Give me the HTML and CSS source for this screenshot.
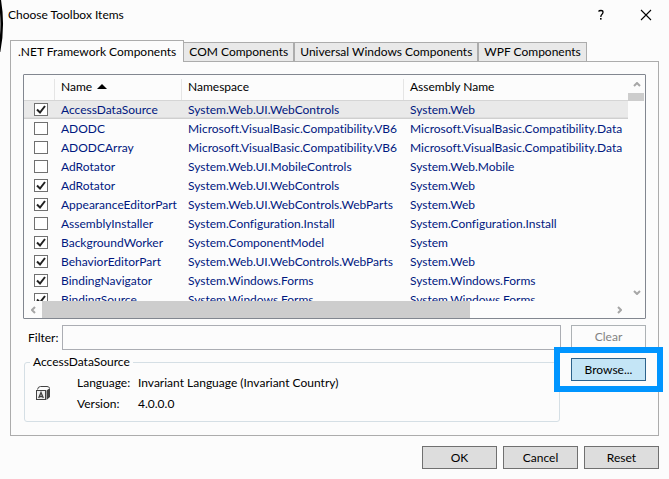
FILE: index.html
```html
<!DOCTYPE html>
<html lang="en">
<head>
    <meta charset="UTF-8">
    <meta name="viewport" content="width=device-width, initial-scale=1.0">
    <title>Choose Toolbox Items</title>
    <link rel="stylesheet" href="styles.css">
</head>
<body>
    <svg class="arc" viewBox="0 0 4 52" aria-hidden="true">
        <path d="M-1 -4 Q4.5 24 -1 52" fill="none" stroke="#000" stroke-width="2.6"/>
    </svg>

    <header class="titlebar">
        <h1>Choose Toolbox Items</h1>
        <button class="title-btn" aria-label="Help">
            <svg width="8" height="12" viewBox="0 0 8 12"><path d="M1.5 2.6 Q2 1.5 4 1.5 Q6 1.5 6 3.2 Q6 4.3 5 5.2 Q3.8 6.2 3.8 8" fill="none" stroke="#000" stroke-width="1.3"/><rect x="3" y="9" width="1.6" height="1.6"/></svg>
        </button>
        <button class="title-btn" aria-label="Close">
            <svg width="12" height="12" viewBox="0 0 12 12"><path d="M1 1 L11 11 M11 1 L1 11" stroke="#000" stroke-width="1.1"/></svg>
        </button>
    </header>

    <main>
        <div class="tabs" role="tablist">
            <button class="tab active" role="tab" aria-selected="true">.NET Framework Components</button>
            <button class="tab" role="tab">COM Components</button>
            <button class="tab" role="tab">Universal Windows Components</button>
            <button class="tab" role="tab">WPF Components</button>
        </div>

        <section class="panel">
            <div class="list">
                <div class="list-view">
                    <table>
                        <colgroup><col class="col-check"><col class="col-name"><col class="col-space"><col></colgroup>
                        <thead>
                            <tr>
                                <th></th>
                                <th>Name <svg width="10" height="5" viewBox="0 0 10 5"><path d="M5 0 L10 5 H0 Z"/></svg></th>
                                <th>Namespace</th>
                                <th>Assembly Name</th>
                            </tr>
                        </thead>
                        <tbody>
                            <tr class="selected"><td><input type="checkbox" id="c1" checked></td><td><label for="c1">AccessDataSource</label></td><td>System.Web.UI.WebControls</td><td>System.Web</td></tr>
                            <tr><td><input type="checkbox" id="c2"></td><td><label for="c2">ADODC</label></td><td>Microsoft.VisualBasic.Compatibility.VB6</td><td>Microsoft.VisualBasic.Compatibility.Data</td></tr>
                            <tr><td><input type="checkbox" id="c3"></td><td><label for="c3">ADODCArray</label></td><td>Microsoft.VisualBasic.Compatibility.VB6</td><td>Microsoft.VisualBasic.Compatibility.Data</td></tr>
                            <tr><td><input type="checkbox" id="c4"></td><td><label for="c4">AdRotator</label></td><td>System.Web.UI.MobileControls</td><td>System.Web.Mobile</td></tr>
                            <tr><td><input type="checkbox" id="c5" checked></td><td><label for="c5">AdRotator</label></td><td>System.Web.UI.WebControls</td><td>System.Web</td></tr>
                            <tr><td><input type="checkbox" id="c6" checked></td><td><label for="c6">AppearanceEditorPart</label></td><td>System.Web.UI.WebControls.WebParts</td><td>System.Web</td></tr>
                            <tr><td><input type="checkbox" id="c7"></td><td><label for="c7">AssemblyInstaller</label></td><td>System.Configuration.Install</td><td>System.Configuration.Install</td></tr>
                            <tr><td><input type="checkbox" id="c8" checked></td><td><label for="c8">BackgroundWorker</label></td><td>System.ComponentModel</td><td>System</td></tr>
                            <tr><td><input type="checkbox" id="c9" checked></td><td><label for="c9">BehaviorEditorPart</label></td><td>System.Web.UI.WebControls.WebParts</td><td>System.Web</td></tr>
                            <tr><td><input type="checkbox" id="c10" checked></td><td><label for="c10">BindingNavigator</label></td><td>System.Windows.Forms</td><td>System.Windows.Forms</td></tr>
                            <tr><td><input type="checkbox" id="c11" checked></td><td><label for="c11">BindingSource</label></td><td>System.Windows.Forms</td><td>System.Windows.Forms</td></tr>
                        </tbody>
                    </table>
                </div>
                <div class="vscroll">
                    <button aria-label="Scroll up"><svg width="8" height="5" viewBox="0 0 8 5"><path d="M1 4 L4 1 L7 4"/></svg></button>
                    <div class="thumb"></div>
                    <button aria-label="Scroll down"><svg width="8" height="5" viewBox="0 0 8 5"><path d="M1 1 L4 4 L7 1"/></svg></button>
                </div>
                <div class="hscroll">
                    <button aria-label="Scroll left"><svg width="5" height="8" viewBox="0 0 5 8"><path d="M4 1 L1 4 L4 7"/></svg></button>
                    <div class="thumb"></div>
                    <button aria-label="Scroll right"><svg width="5" height="8" viewBox="0 0 5 8"><path d="M1 1 L4 4 L1 7"/></svg></button>
                </div>
            </div>

            <div class="filter">
                <label for="filter">Filter:</label>
                <input type="text" id="filter">
                <button class="btn" disabled>Clear</button>
            </div>

            <div class="details">
                <fieldset>
                    <legend>AccessDataSource</legend>
                    <svg class="component-icon" width="16" height="16" viewBox="0 0 16 16">
                        <path d="M2.5 4.5 Q3 1.5 5.5 1.5 H12 Q14 1.5 14.5 3" fill="none" stroke="#424242"/>
                        <path d="M11.5 5.5 L15 3 V12 L11.5 15 Z" fill="#424242"/>
                        <rect x="1" y="5" width="10" height="10" fill="#424242"/>
                        <rect x="2" y="6" width="8" height="8" fill="#f0f0f0"/>
                        <path d="M3.7 13 L6 7.5 L8.3 13 M4.5 11.5 H7.5" fill="none" stroke="#424242" stroke-width="1.3"/>
                    </svg>
                    <dl>
                        <dt>Language:</dt><dd>Invariant Language (Invariant Country)</dd>
                        <dt>Version:</dt><dd>4.0.0.0</dd>
                    </dl>
                </fieldset>
                <div class="browse">
                    <button class="btn hot">Browse...</button>
                </div>
            </div>
        </section>
    </main>

    <footer>
        <button class="btn">OK</button>
        <button class="btn">Cancel</button>
        <button class="btn">Reset</button>
    </footer>
</body>
</html>
```

FILE: styles.css
```css
:root {
    --bg: #fcfcfc;
    --border: #acacac;
    --list-border: #828790;
    --thumb: #cdcdcd;
    --link: #00187f;
    --highlight: #0095ff;
}

* {
    box-sizing: border-box;
    margin: 0;
    padding: 0;
}

body {
    font: 12px/16px Lato, "Open Sans", sans-serif;
    font-variant-ligatures: none;
    color: #000;
    background: var(--bg);
}

button,
input {
    font: inherit;
    color: inherit;
}

.arc {
    position: absolute;
    top: 0;
    left: 0;
    width: 4px;
    height: 52px;
}

.titlebar {
    display: flex;
    align-items: center;
    height: 40px;
    padding: 0 9px 10px 8px;
}

.titlebar h1 {
    flex: 1;
    font-size: 12px;
    font-weight: normal;
}

.title-btn {
    display: flex;
    justify-content: center;
    width: 28px;
    margin-left: 17px;
    border: none;
    background: none;
}

main {
    padding: 0 10px;
}

.tabs {
    display: flex;
    align-items: flex-end;
}

.tab {
    height: 19px;
    padding: 0 5px;
    border: 1px solid var(--border);
    border-bottom: none;
    background: #e9e9e9;
    line-height: 18px;
    white-space: nowrap;
}

.tab.active {
    height: 22px;
    margin-bottom: -1px;
    padding: 0 7px;
    background: var(--bg);
    z-index: 1;
}

.tab.active + .tab {
    border-left: none;
}

.panel {
    padding: 12px 12px 13px;
    border: 1px solid var(--border);
}

.list {
    display: grid;
    grid-template-columns: 1fr 17px;
    grid-template-rows: 226px 17px;
    border: 1px solid var(--list-border);
    border-radius: 1px;
}

.list-view {
    overflow: hidden;
}

table {
    width: 100%;
    table-layout: fixed;
    border-collapse: collapse;
}

.col-check {
    width: 31px;
}

.col-name {
    width: 127px;
}

.col-space {
    width: 222px;
}

th {
    height: 25px;
    padding-left: 6px;
    border-bottom: 1px solid #d5d5d5;
    background: linear-gradient(#e5e5e5, #e5e5e5) right bottom / 1px 21px no-repeat;
    font-weight: normal;
    text-align: left;
}

th:last-child {
    background: none;
}

th svg {
    margin-left: 2px;
    vertical-align: 2px;
}

td {
    height: 19px;
    padding-left: 6px;
    color: var(--link);
    white-space: nowrap;
}

td:first-child {
    padding-left: 10px;
}

.selected td {
    background: #e9e9e9;
    box-shadow: inset 0 -1px #cfcfcf, inset 0 -2px #dedede;
}

input[type="checkbox"] {
    display: block;
    appearance: none;
    width: 14px;
    height: 13px;
    border: 1px solid #707070;
    background: #fff;
}

input[type="checkbox"]:checked {
    background: #fff url("data:image/svg+xml,%3Csvg xmlns='http://www.w3.org/2000/svg' viewBox='0 0 12 11'%3E%3Cpath d='M2 5.5 L5 8.5 L10 2' fill='none' stroke='%23212121' stroke-width='2'/%3E%3C/svg%3E") center / 12px 11px no-repeat;
}

.vscroll,
.hscroll {
    display: flex;
}

.vscroll {
    flex-direction: column;
    padding-top: 1px;
}

.vscroll button,
.hscroll button {
    display: flex;
    flex: none;
    align-items: center;
    justify-content: center;
    width: 17px;
    height: 17px;
    border: none;
    background: none;
}

.vscroll path,
.hscroll path {
    fill: none;
    stroke: #a6a6a6;
    stroke-width: 2;
}

.thumb {
    background: var(--thumb);
}

.vscroll .thumb {
    width: 16px;
    height: 8px;
}

.vscroll button:last-child {
    margin-top: auto;
}

.hscroll {
    padding-left: 1px;
}

.hscroll .thumb {
    width: 71%;
}

.hscroll button:last-child {
    margin-left: auto;
}

.filter {
    display: flex;
    align-items: flex-start;
    margin-top: 6px;
}

.filter label {
    width: 39px;
    padding: 5px 0 0 5px;
}

.filter input {
    flex: 1;
    min-width: 0;
    height: 25px;
    margin-right: 10px;
    padding: 0 4px;
    border: 1px solid #abadb3;
    background: var(--bg);
}

.btn {
    width: 75px;
    height: 23px;
    border: 1px solid #707070;
    background: #ddd;
}

.btn:disabled {
    border-color: #adb2b5;
    background: var(--bg);
    color: #838383;
}

.btn.hot {
    border-color: #2c628b;
    background: #c4e5f6;
}

.details {
    display: flex;
    align-items: flex-start;
    gap: 11px;
    margin-top: 4px;
}

fieldset {
    display: flex;
    flex: 1;
    gap: 26px;
    height: 68px;
    margin-left: 1px;
    padding: 5px 10px;
    border: 1px solid #d5dfe5;
    border-radius: 3px;
}

legend {
    margin-left: -5px;
    padding: 0 3px;
}

.component-icon {
    margin-top: 10px;
}

dl {
    display: grid;
    grid-template-columns: 61px auto;
    align-content: start;
    row-gap: 5px;
}

.browse {
    position: relative;
    display: flex;
    margin-top: 4px;
}

.browse::after {
    content: "";
    position: absolute;
    inset: -11px -17px;
    border: 6px solid var(--highlight);
    pointer-events: none;
}

footer {
    display: flex;
    justify-content: flex-end;
    gap: 6px;
    padding: 10px;
}
```
